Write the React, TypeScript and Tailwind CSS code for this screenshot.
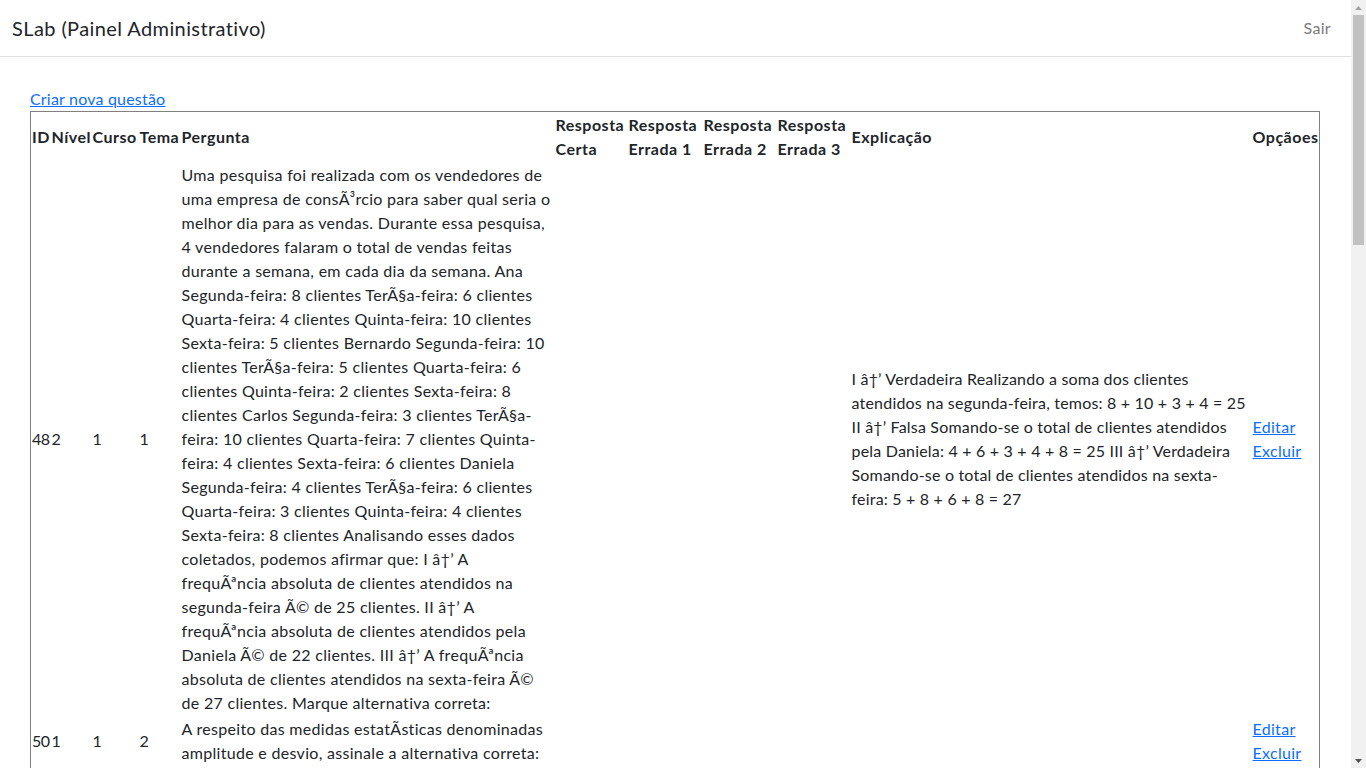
import React from "react";

type Questao = {
  id: number;
  nivel: number;
  curso: number;
  tema: number;
  pergunta: string;
  certa: string;
  errada1: string;
  errada2: string;
  errada3: string;
  explicacao: string;
};

// textos vindos do banco (com a codificação quebrada, como aparece no painel)
const questoes: Questao[] = [
  {
    id: 48,
    nivel: 2,
    curso: 1,
    tema: 1,
    pergunta:
      "Uma pesquisa foi realizada com os vendedores de uma empresa de consÃ³rcio para saber qual seria o melhor dia para as vendas. Durante essa pesquisa, 4 vendedores falaram o total de vendas feitas durante a semana, em cada dia da semana. Ana Segunda-feira: 8 clientes TerÃ§a-feira: 6 clientes Quarta-feira: 4 clientes Quinta-feira: 10 clientes Sexta-feira: 5 clientes Bernardo Segunda-feira: 10 clientes TerÃ§a-feira: 5 clientes Quarta-feira: 6 clientes Quinta-feira: 2 clientes Sexta-feira: 8 clientes Carlos Segunda-feira: 3 clientes TerÃ§a-feira: 10 clientes Quarta-feira: 7 clientes Quinta-feira: 4 clientes Sexta-feira: 6 clientes Daniela Segunda-feira: 4 clientes TerÃ§a-feira: 6 clientes Quarta-feira: 3 clientes Quinta-feira: 4 clientes Sexta-feira: 8 clientes Analisando esses dados coletados, podemos afirmar que: I â†’ A frequÃªncia absoluta de clientes atendidos na segunda-feira Ã© de 25 clientes. II â†’ A frequÃªncia absoluta de clientes atendidos pela Daniela Ã© de 22 clientes. III â†’ A frequÃªncia absoluta de clientes atendidos na sexta-feira Ã© de 27 clientes. Marque alternativa correta:",
    certa: "",
    errada1: "",
    errada2: "",
    errada3: "",
    explicacao:
      "I â†’ Verdadeira Realizando a soma dos clientes atendidos na segunda-feira, temos: 8 + 10 + 3 + 4 = 25 II â†’ Falsa Somando-se o total de clientes atendidos pela Daniela: 4 + 6 + 3 + 4 + 8 = 25 III â†’ Verdadeira Somando-se o total de clientes atendidos na sexta-feira: 5 + 8 + 6 + 8 = 27",
  },
  {
    id: 50,
    nivel: 1,
    curso: 1,
    tema: 2,
    pergunta:
      "A respeito das medidas estatÃ\u00ADsticas denominadas amplitude e desvio, assinale a alternativa correta:",
    certa: "",
    errada1: "",
    errada2: "",
    errada3: "",
    explicacao: "",
  },
  {
    id: 51,
    nivel: 2,
    curso: 1,
    tema: 2,
    pergunta:
      "Em uma turma de 10 alunos, as notas obtidas na prova de matemÃ¡tica foram: 4, 5, 5, 6, 7, 7, 7, 8, 9 e 10. Considerando esses dados, a mÃ©dia aritmÃ©tica, a moda e a mediana das notas sÃ£o, respectivamente:",
    certa: "",
    errada1: "",
    errada2: "",
    errada3: "",
    explicacao:
      "A mÃ©dia Ã© obtida somando-se todas as notas e dividindo pelo total de alunos: 68 / 10 = 6,8. A moda Ã© o valor que mais se repete: 7. A mediana Ã© a mÃ©dia dos dois valores centrais: (7 + 7) / 2 = 7.",
  },
  {
    id: 52,
    nivel: 3,
    curso: 1,
    tema: 3,
    pergunta:
      "Uma loja registrou, durante cinco dias, a quantidade de produtos vendidos: Segunda-feira: 12 produtos TerÃ§a-feira: 15 produtos Quarta-feira: 9 produtos Quinta-feira: 18 produtos Sexta-feira: 6 produtos. Sabendo que a amplitude Ã© a diferenÃ§a entre o maior e o menor valor observado, assinale a alternativa correta:",
    certa: "",
    errada1: "",
    errada2: "",
    errada3: "",
    explicacao:
      "A amplitude Ã© dada por 18 â€“ 6 = 12. A mÃ©dia das vendas Ã© (12 + 15 + 9 + 18 + 6) / 5 = 12.",
  },
];

const cell = "p-px align-middle text-left";
const head = "p-px align-middle text-left tracking-[0.5px]";

// barra de rolagem no estilo clássico do navegador
function Rolagem() {
  return (
    <div className="w-[15px] shrink-0 h-screen bg-[#f1f1f1] flex flex-col items-center">
      <div className="h-[15px] w-full flex items-center justify-center">
        <svg width="7" height="4" viewBox="0 0 7 4">
          <path d="M3.5 0L7 4H0z" fill="#a3a3a3" />
        </svg>
      </div>
      <div className="w-[11px] h-[230px] bg-[#c1c1c1]" />
      <div className="flex-1" />
      <div className="h-[15px] w-full flex items-center justify-center">
        <svg width="7" height="4" viewBox="0 0 7 4">
          <path d="M0 0H7L3.5 4z" fill="#505050" />
        </svg>
      </div>
    </div>
  );
}

export default function App() {
  return (
    <div className="flex h-screen overflow-hidden bg-white text-[#212529] font-['Lato',sans-serif] text-base leading-6 tracking-[0.3px]">
      <div className="flex-1 min-w-0 overflow-y-auto [scrollbar-width:none]">
        {/* barra superior */}
        <div className="h-[57px] flex items-center justify-between pl-3 pr-5 border-b border-[#e0e0e0]">
          <span className="text-xl tracking-[0.4px]">SLab (Painel Administrativo)</span>
          <a href="#" className="text-[#7a7a7a] no-underline">
            Sair
          </a>
        </div>

        <div className="pl-[30px] pr-[31px] pt-[30px] pb-[200px]">
          <a href="#" className="text-[#0d6efd] underline tracking-[0.2px]">
            Criar nova questão
          </a>
          <table className="w-full table-fixed border border-[#808080]">
            <colgroup>
              <col className="w-[20px]" />
              <col className="w-[41px]" />
              <col className="w-[47px]" />
              <col className="w-[42px]" />
              <col className="w-[374px]" />
              <col className="w-[73px]" />
              <col className="w-[75px]" />
              <col className="w-[74px]" />
              <col className="w-[74px]" />
              <col className="w-[401px]" />
              <col />
            </colgroup>
            <thead>
              <tr className="font-bold">
                <th className={head + " tracking-[-0.2px]"}>ID</th>
                <th className={head}>Nível</th>
                <th className={head}>Curso</th>
                <th className={head}>Tema</th>
                <th className={head}>Pergunta</th>
                <th className={head}>Resposta Certa</th>
                <th className={head}>Resposta Errada 1</th>
                <th className={head}>Resposta Errada 2</th>
                <th className={head}>Resposta Errada 3</th>
                <th className={head}>Explicação</th>
                <th className={head + " whitespace-nowrap"}>Opçãoes</th>
              </tr>
            </thead>
            <tbody>
              {questoes.map((q) => (
                <tr key={q.id}>
                  <td className={cell + " tracking-[-0.6px]"}>{q.id}</td>
                  <td className={cell}>{q.nivel}</td>
                  <td className={cell}>{q.curso}</td>
                  <td className={cell}>{q.tema}</td>
                  <td className={cell + " pr-[3px]"}>{q.pergunta}</td>
                  <td className={cell}>{q.certa}</td>
                  <td className={cell}>{q.errada1}</td>
                  <td className={cell}>{q.errada2}</td>
                  <td className={cell}>{q.errada3}</td>
                  <td className={cell + " tracking-[0.2px]"}>{q.explicacao}</td>
                  <td className={cell}>
                    <a href="#" className="block text-[#0d6efd] underline">
                      Editar
                    </a>
                    <a href="#" className="block text-[#0d6efd] underline">
                      Excluir
                    </a>
                  </td>
                </tr>
              ))}
            </tbody>
          </table>
        </div>
      </div>
      <Rolagem />
    </div>
  );
}
